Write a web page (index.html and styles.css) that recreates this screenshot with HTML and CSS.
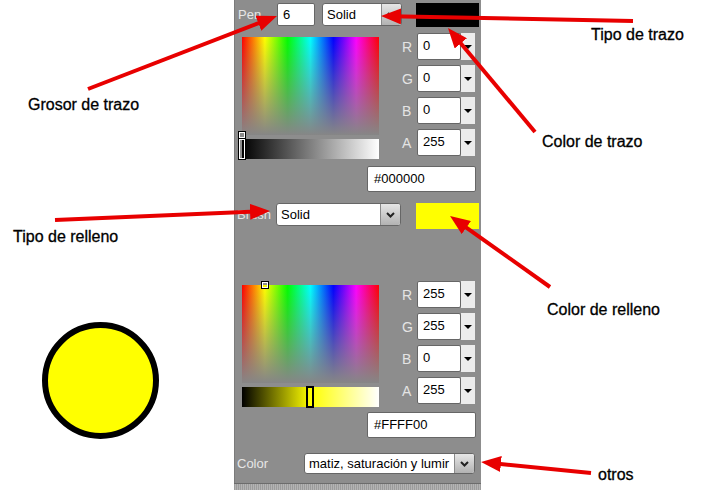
FILE: index.html
```html
<!DOCTYPE html>
<html>
<head>
<meta charset="utf-8">
<title>Pen y Brush</title>
<link rel="stylesheet" href="styles.css">
</head>
<body>
<div class="page">
  <div class="canvas">
    <div class="circle"></div>
  </div>

  <div class="panel">
    <div class="row row-pen">
      <span class="lbl lbl-pen">Pen</span>
      <div class="field field-width">6</div>
      <div class="combo combo-pen">
        <span class="combo-text">Solid</span>
        <span class="combo-btn"><svg width="9" height="6" viewBox="0 0 9 6"><path d="M1 1 L4.5 4.5 L8 1" fill="none" stroke="#222" stroke-width="2"/></svg></span>
      </div>
      <div class="swatch swatch-black"></div>
    </div>

    <div class="picker picker-pen">
      <div class="spectrum-col">
        <div class="spectrum"><span class="marker marker-pen"></span></div>
        <div class="lum lum-gray"><span class="handle handle-pen"></span></div>
      </div>
      <div class="channels">
        <div class="channel"><span class="ch-lbl">R</span><div class="spin"><span class="spin-val">0</span><span class="spin-btn"></span></div></div>
        <div class="channel"><span class="ch-lbl">G</span><div class="spin"><span class="spin-val">0</span><span class="spin-btn"></span></div></div>
        <div class="channel"><span class="ch-lbl">B</span><div class="spin"><span class="spin-val">0</span><span class="spin-btn"></span></div></div>
        <div class="channel"><span class="ch-lbl">A</span><div class="spin"><span class="spin-val">255</span><span class="spin-btn"></span></div></div>
      </div>
    </div>
    <div class="hex hex-pen">#000000</div>

    <div class="row row-brush">
      <span class="lbl lbl-brush">Brush</span>
      <div class="combo combo-brush">
        <span class="combo-text">Solid</span>
        <span class="combo-btn"><svg width="9" height="6" viewBox="0 0 9 6"><path d="M1 1 L4.5 4.5 L8 1" fill="none" stroke="#222" stroke-width="2"/></svg></span>
      </div>
      <div class="swatch swatch-yellow"></div>
    </div>

    <div class="picker picker-brush">
      <div class="spectrum-col">
        <div class="spectrum"><span class="marker marker-brush"></span></div>
        <div class="lum lum-yellow"><span class="handle handle-brush"></span></div>
      </div>
      <div class="channels">
        <div class="channel"><span class="ch-lbl">R</span><div class="spin"><span class="spin-val">255</span><span class="spin-btn"></span></div></div>
        <div class="channel"><span class="ch-lbl">G</span><div class="spin"><span class="spin-val">255</span><span class="spin-btn"></span></div></div>
        <div class="channel"><span class="ch-lbl">B</span><div class="spin"><span class="spin-val">0</span><span class="spin-btn"></span></div></div>
        <div class="channel"><span class="ch-lbl">A</span><div class="spin"><span class="spin-val">255</span><span class="spin-btn"></span></div></div>
      </div>
    </div>
    <div class="hex hex-brush">#FFFF00</div>

    <div class="row row-color">
      <span class="lbl lbl-color">Color</span>
      <div class="combo combo-color">
        <span class="combo-text">matiz, saturación y lumir</span>
        <span class="combo-btn"><svg width="9" height="6" viewBox="0 0 9 6"><path d="M1 1 L4.5 4.5 L8 1" fill="none" stroke="#222" stroke-width="2"/></svg></span>
      </div>
    </div>

    <div class="grip"></div>
  </div>

  <div class="margin-right"></div>

  <span class="note note-grosor">Grosor de trazo</span>
  <span class="note note-tipo-relleno">Tipo de relleno</span>
  <span class="note note-tipo-trazo">Tipo de trazo</span>
  <span class="note note-color-trazo">Color de trazo</span>
  <span class="note note-color-relleno">Color de relleno</span>
  <span class="note note-otros">otros</span>

  <svg class="arrows" width="715" height="490" viewBox="0 0 715 490">
    <defs>
      <marker id="ah" markerUnits="userSpaceOnUse" markerWidth="20" markerHeight="16" refX="10" refY="8" orient="auto">
        <path d="M0,0 L20,8 L0,16 Z" fill="#e80000"/>
      </marker>
    </defs>
    <g stroke="#e80000" stroke-width="4" fill="none" marker-end="url(#ah)">
      <line x1="88" y1="89" x2="267.7" y2="19.6"/>
      <line x1="633" y1="21" x2="391" y2="16.2"/>
      <line x1="535" y1="132" x2="454.4" y2="35.7"/>
      <line x1="55" y1="220" x2="260" y2="211.4"/>
      <line x1="550" y1="287" x2="458.2" y2="221.8"/>
      <line x1="591" y1="473" x2="491" y2="463"/>
    </g>
  </svg>
</div>
</body>
</html>
```

FILE: styles.css
```css
body {
  margin: 0;
  background: #ffffff;
  font-family: "Liberation Sans", Arial, sans-serif;
}

.page {
  position: relative;
  display: flex;
  width: 715px;
  height: 490px;
  overflow: hidden;
  background: #ffffff;
}

.canvas {
  width: 234px;
  flex: none;
}

.circle {
  margin: 322px 0 0 42px;
  width: 117px;
  height: 117px;
  box-sizing: border-box;
  border: 6px solid #000;
  border-radius: 50%;
  background: #ffff00;
}

.panel {
  width: 247px;
  height: 490px;
  flex: none;
  display: flex;
  flex-direction: column;
  background: #8d8d8d;
  box-shadow: inset 1px 0 0 #7b7b7b;
}

.margin-right {
  flex: 1;
}

/* rows */
.row {
  display: flex;
  align-items: flex-start;
}

.row-pen {
  margin-top: 3px;
  padding-left: 4px;
}

.row-brush {
  margin-top: 11px;
  padding-left: 3px;
}

.row-color {
  margin-top: 15px;
  padding-left: 3px;
}

.lbl {
  color: #e6e6e6;
  font-size: 13px;
}

.lbl-pen,
.lbl-brush {
  width: 39px;
  line-height: 23px;
}

.lbl-color {
  width: 67px;
  line-height: 21px;
}

.field {
  box-sizing: border-box;
  background: #fff;
  border: 1px solid #666;
  border-radius: 2px;
  font-size: 13px;
  line-height: 16px;
  color: #000;
  padding: 3px 0 0 5px;
}

.field-width {
  width: 38px;
  height: 23px;
}

.combo {
  display: flex;
  box-sizing: border-box;
  height: 23px;
  background: #fff;
  border: 1px solid #666;
  border-radius: 3px;
  overflow: hidden;
}

.combo-text {
  flex: 1;
  padding: 3px 0 0 4px;
  font-size: 13px;
  line-height: 16px;
  color: #000;
  white-space: nowrap;
  overflow: hidden;
}

.combo-btn {
  width: 19px;
  flex: none;
  border-left: 1px solid #8a8a8a;
  background: linear-gradient(#e6e6e6, #b2b2b2);
  display: flex;
  align-items: center;
  justify-content: center;
}

.combo-pen {
  width: 80px;
  margin-left: 7px;
}

.combo-brush {
  width: 125px;
}

.combo-color {
  width: 171px;
  height: 21px;
}

.combo-color .combo-text {
  padding-top: 2px;
}

.swatch {
  box-sizing: border-box;
  width: 63px;
}

.swatch-black {
  height: 24px;
  margin-left: 14px;
  background: #000;
}

.swatch-yellow {
  height: 26px;
  margin-left: 15px;
  background: #ffff00;
}

/* picker */
.picker {
  display: flex;
  padding-left: 8px;
  padding-right: 6px;
}

.picker-pen {
  margin-top: 6px;
}

.picker-brush {
  margin-top: 52px;
}

.spectrum-col {
  width: 137px;
  padding-top: 4px;
  display: flex;
  flex-direction: column;
  gap: 4px;
}

.spectrum {
  position: relative;
  height: 98px;
  background:
    linear-gradient(to bottom, rgba(136, 136, 136, 0), #868686),
    linear-gradient(to right, #ff0000, #ffff00, #00ff00, #00ffff, #0000ff, #ff00ff, #ff0000);
}

.lum {
  position: relative;
  height: 20px;
}

.lum-gray {
  background: linear-gradient(to right, #000000, #ffffff);
}

.lum-yellow {
  background: linear-gradient(to right, #000000, #ffff00 50%, #ffffff);
}

.handle {
  position: absolute;
  top: -1px;
  width: 8px;
  height: 22px;
  box-sizing: border-box;
  border: 1px solid #000;
  box-shadow: inset 0 0 0 1px #fff;
}

.handle-pen {
  left: -4px;
}

.handle-brush {
  left: 64px;
  border-width: 2px;
  box-shadow: none;
}

.marker {
  position: absolute;
  width: 8px;
  height: 8px;
  box-sizing: border-box;
  border: 1px solid #000;
  box-shadow: inset 0 0 0 1px #fff;
}

.marker-pen {
  left: -4px;
  bottom: -4px;
  background: #8a8a8a;
}

.marker-brush {
  left: 19px;
  top: -4px;
}

.channels {
  margin-left: auto;
  display: flex;
  flex-direction: column;
  gap: 5px;
}

.channel {
  display: flex;
  align-items: center;
  height: 27px;
}

.ch-lbl {
  width: 15px;
  color: #e4e4e4;
  font-size: 14px;
}

.spin {
  display: flex;
  height: 27px;
}

.spin-val {
  width: 44px;
  box-sizing: border-box;
  background: #fff;
  border: 1px solid #666;
  border-radius: 2px;
  font-size: 13px;
  line-height: 16px;
  color: #000;
  padding: 4px 0 0 5px;
}

.spin-btn {
  position: relative;
  width: 14px;
  background: #ececec;
}

.spin-btn::after {
  content: "";
  position: absolute;
  left: 3px;
  top: 12px;
  border-left: 4px solid transparent;
  border-right: 4px solid transparent;
  border-top: 4px solid #000;
}

.hex {
  width: 109px;
  height: 26px;
  box-sizing: border-box;
  margin-left: 133px;
  background: #fff;
  border: 1px solid #666;
  border-radius: 2px;
  font-size: 13px;
  line-height: 16px;
  color: #000;
  padding: 4px 0 0 6px;
}

.hex-pen {
  margin-top: 7px;
}

.hex-brush {
  margin-top: 5px;
}

.grip {
  margin-top: auto;
  height: 6px;
  border-top: 1px solid #6c6c6c;
  background: repeating-linear-gradient(90deg, #9c9c9c 0 1px, #b4b4b4 1px 2px);
}

/* annotations (overlay) */
.note {
  position: absolute;
  font-size: 16px;
  line-height: 16px;
  color: #000;
  white-space: nowrap;
  -webkit-text-stroke: 0.3px #000;
}

.note-grosor { left: 28px; top: 97px; }
.note-tipo-relleno { left: 13px; top: 229px; }
.note-tipo-trazo { left: 591px; top: 27px; }
.note-color-trazo { left: 542px; top: 134px; }
.note-color-relleno { left: 547px; top: 302px; }
.note-otros { left: 598px; top: 467px; }

.arrows {
  position: absolute;
  left: 0;
  top: 0;
  pointer-events: none;
}
```
